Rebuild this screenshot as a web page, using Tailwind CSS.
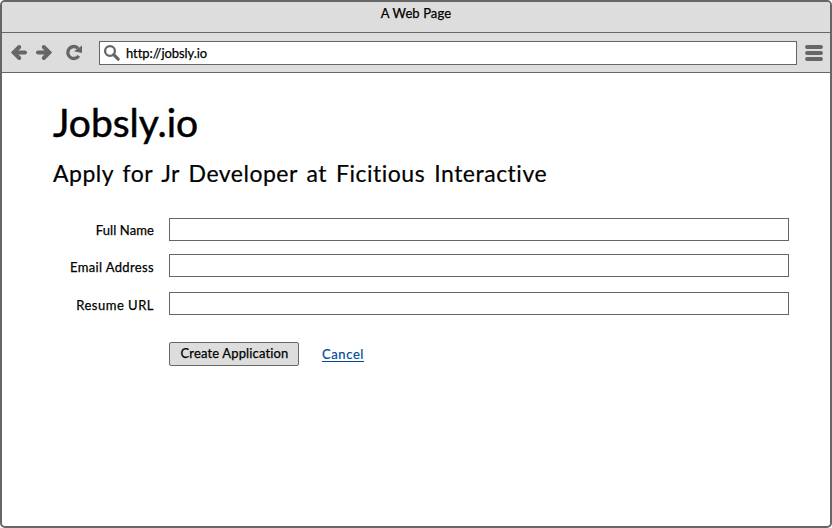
<!DOCTYPE html>
<html lang="en"><head><meta charset="utf-8"><title>Jobsly.io</title>
<script src="https://cdn.jsdelivr.net/npm/@tailwindcss/browser@4"></script></head>
<body class="bg-white">
<div class="w-[832px] h-[528px] border-2 border-[#666] rounded-[5px] overflow-hidden bg-white text-black font-['Lato',sans-serif] text-[13px] leading-4 font-normal flex flex-col">
  <header class="h-[31px] shrink-0 bg-[#ddd] border-b border-[#666] text-center pt-[3px]"><span class="tracking-[0.1px] [-webkit-text-stroke:0.25px_black]">A Web Page</span></header>
  <nav class="h-[40px] shrink-0 bg-[#ddd] border-b border-[#666] flex items-center pl-[8px] pr-[7px]">
    <svg class="w-[18px] h-[18px]" viewBox="0 0 18 18" fill="none" stroke="#666" stroke-width="4" stroke-linecap="round" stroke-linejoin="miter"><path d="M4 8.5H15"/><path d="M9.2 3L3.7 8.5L9.2 14"/></svg>
    <svg class="w-[18px] h-[18px] ml-[7px]" viewBox="0 0 18 18" fill="none" stroke="#666" stroke-width="4" stroke-linecap="round" stroke-linejoin="miter"><path d="M3 8.5H14"/><path d="M8.8 3L14.3 8.5L8.8 14"/></svg>
    <svg class="w-[18px] h-[18px] ml-[12px]" viewBox="0 0 18 18"><path d="M13 4.2A6 6 0 1 0 13.8 11.8" fill="none" stroke="#666" stroke-width="3.3"/><path d="M17 1.5V9L9 7.2Z" fill="#666"/></svg>
    <div class="ml-[16px] w-[698px] h-[24px] bg-white border border-[#666] flex items-center pl-[3px]">
      <svg class="w-[18px] h-[18px]" viewBox="0 0 18 18" fill="none" stroke="#666"><circle cx="7" cy="7" r="4.9" stroke-width="2.3"/><path d="M10.7 10.7L15.2 15.2" stroke-width="3.2" stroke-linecap="round"/></svg>
      <span class="ml-[5px] tracking-[-0.07px] [-webkit-text-stroke:0.25px_black]">http://jobsly.io</span>
    </div>
    <svg class="w-[18px] h-[18px] ml-auto" viewBox="0 0 18 18" stroke="#666" stroke-width="3.8" stroke-linecap="round"><path d="M2 3H16M2 9H16M2 15H16"/></svg>
  </nav>
  <main class="pl-[51px] pt-[25px]">
    <h1 class="text-[39px] leading-[48px] tracking-[0px] h-[50px] [-webkit-text-stroke:0.5px_black]">Jobsly.io</h1>
    <h2 class="text-[23px] leading-[28px] mt-[11px] tracking-[0.5px] [word-spacing:2.7px] [-webkit-text-stroke:0.2px_black]">Apply for Jr Developer at Ficitious Interactive</h2>
    <form class="mt-[31px] [-webkit-text-stroke:0.25px_black]">
      <div class="flex h-[36px]"><label for="n" class="w-[101px] pt-[4px] text-right tracking-[0.1px]">Full Name</label><input id="n" class="ml-[15px] w-[620px] h-[23px] border border-[#666]"></div>
      <div class="flex h-[38px]"><label for="e" class="w-[101px] pt-[5px] text-right tracking-[0.36px]">Email Address</label><input id="e" class="ml-[15px] w-[620px] h-[23px] border border-[#666]"></div>
      <div class="flex h-[50px]"><label for="r" class="w-[101px] pt-[5px] text-right tracking-[0.5px]">Resume URL</label><input id="r" class="ml-[15px] w-[620px] h-[23px] border border-[#666]"></div>
      <div class="flex pl-[116px]"><button type="button" class="w-[130px] h-[24px] rounded-[2px] border border-[#666] bg-[#ddd] pb-[3px] pl-px"><span class="tracking-[0.15px]">Create Application</span></button><a class="ml-[23px] mt-[4px] h-[16px] border-b border-[#004a9c] text-[#004a9c] tracking-[0.6px] [-webkit-text-stroke:0.2px_#004a9c]">Cancel</a></div>
    </form>
  </main>
</div>
</body></html>
